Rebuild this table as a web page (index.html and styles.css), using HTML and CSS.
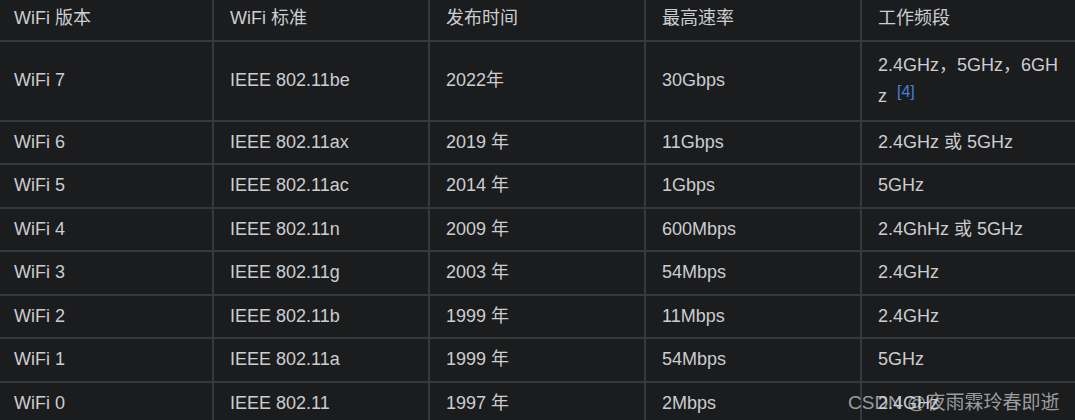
FILE: index.html
```html
<!DOCTYPE html>
<html lang="zh">
<head>
<meta charset="utf-8">
<link rel="stylesheet" href="styles.css">
</head>
<body>
<div class="page">
<table class="wifi">
<colgroup><col><col><col><col><col></colgroup>
<thead>
<tr><th>WiFi 版本</th><th>WiFi 标准</th><th>发布时间</th><th>最高速率</th><th>工作频段</th></tr>
</thead>
<tbody>
<tr class="tall"><td>WiFi 7</td><td>IEEE 802.11be</td><td>2022年</td><td>30Gbps</td><td class="wrap">2.4GHz，5GHz，6GHz <sup class="ref">[4]</sup></td></tr>
<tr><td>WiFi 6</td><td>IEEE 802.11ax</td><td>2019 年</td><td>11Gbps</td><td>2.4GHz 或 5GHz</td></tr>
<tr><td>WiFi 5</td><td>IEEE 802.11ac</td><td>2014 年</td><td>1Gbps</td><td>5GHz</td></tr>
<tr><td>WiFi 4</td><td>IEEE 802.11n</td><td>2009 年</td><td>600Mbps</td><td>2.4GhHz 或 5GHz</td></tr>
<tr><td>WiFi 3</td><td>IEEE 802.11g</td><td>2003 年</td><td>54Mbps</td><td>2.4GHz</td></tr>
<tr><td>WiFi 2</td><td>IEEE 802.11b</td><td>1999 年</td><td>11Mbps</td><td>2.4GHz</td></tr>
<tr><td>WiFi 1</td><td>IEEE 802.11a</td><td>1999 年</td><td>54Mbps</td><td>5GHz</td></tr>
<tr><td>WiFi 0</td><td>IEEE 802.11</td><td>1997 年</td><td>2Mbps</td><td>2.4GHz</td></tr>
</tbody>
</table>
<div class="watermark">CSDN @夜雨霖玲春即逝</div>
</div>
</body>
</html>
```

FILE: styles.css
```css
html, body {
  margin: 0;
  padding: 0;
  background: #1b1c1e;
  overflow: hidden;
}
.page {
  position: relative;
  width: 1075px;
  height: 420px;
  overflow: hidden;
  background: #1b1c1e;
}
.wifi {
  border-collapse: collapse;
  table-layout: fixed;
  width: 1080px;
  margin: -4px 0 0 -4px;
  font-family: "Liberation Sans", "Noto Sans CJK SC", sans-serif;
  font-size: 18px;
  color: #cbcdd0;
}
.wifi col { width: 216px; }
.wifi th, .wifi td {
  border: 2px solid #36393b;
  padding: 8px 16px;
  line-height: 25.5px;
  text-align: left;
  font-weight: normal;
  vertical-align: middle;
}
.wifi .wrap {
  word-break: break-all;
  line-height: 31px;
}
.ref {
  color: #4a7fd8;
  font-size: 16px;
  line-height: 0;
  vertical-align: 5px;
  margin-left: 5px;
}
.watermark {
  position: absolute;
  left: 848px;
  top: 387px;
  font-family: "Liberation Sans", "Noto Sans CJK SC", sans-serif;
  font-size: 19px;
  color: rgba(205, 208, 212, 0.72);
  white-space: nowrap;
}
```
